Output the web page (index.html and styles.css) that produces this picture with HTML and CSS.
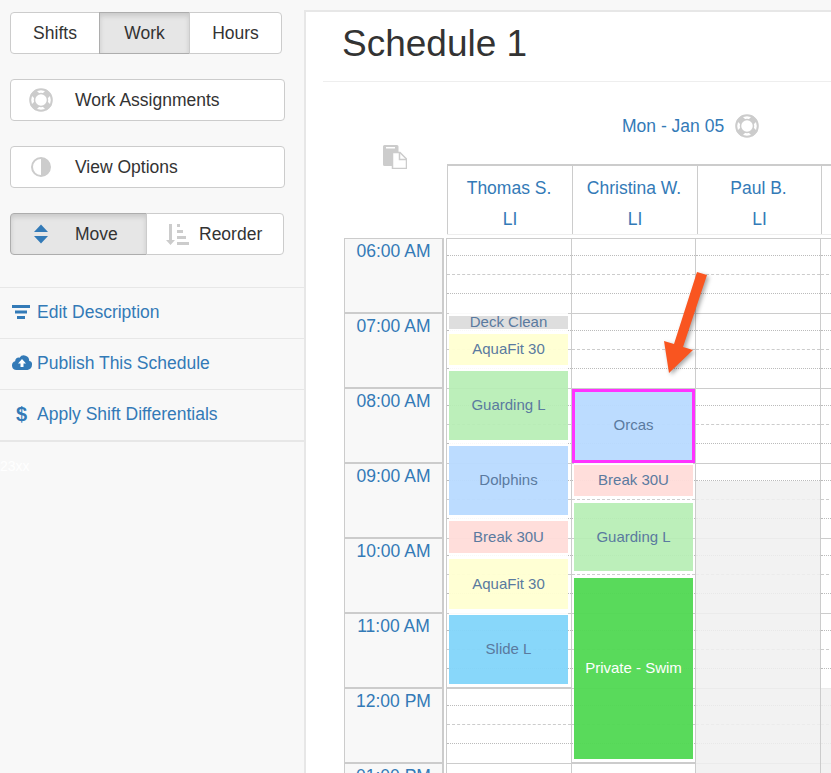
FILE: index.html
```html
<!DOCTYPE html>
<html lang="en">
<head>
    <meta charset="UTF-8">
    <meta name="viewport" content="width=device-width, initial-scale=1.0">
    <title>Schedule 1</title>
    <link rel="stylesheet" href="styles.css">
</head>
<body>
    <aside class="sidebar">
        <div class="btn-group group-mode">
            <button class="btn">Shifts</button>
            <button class="btn active">Work</button>
            <button class="btn">Hours</button>
        </div>

        <button class="btn wide">
            <svg class="btn-icon" width="24" height="24" viewBox="0 0 24 24"><use href="#ring"/></svg>
            Work Assignments
        </button>

        <button class="btn wide">
            <svg class="btn-icon" width="24" height="24" viewBox="0 0 24 24">
                <circle cx="12" cy="12" r="9" fill="#fff" stroke="#ccc" stroke-width="2"/>
                <path d="M12 3a9 9 0 0 1 0 18z" fill="#ccc"/>
            </svg>
            View Options
        </button>

        <div class="btn-group group-tool">
            <button class="btn active tool-move">
                <svg class="btn-icon" width="24" height="24" viewBox="0 0 24 24">
                    <path d="M12 2.500l7 7.500h-14zM12 21.500l-7-7.500h14z" fill="#337ab7"/>
                </svg>
                Move
            </button>
            <button class="btn tool-reorder">
                <svg class="reorder-icon" width="25" height="25" viewBox="0 0 25 25" fill="#ccc">
                    <path d="M4 2h3v16h3l-4.500 5-4.500-5h3zM12 2h3v3h-3zM12 8h6v3h-6zM12 14h9v3h-9zM12 20h12v3h-12z"/>
                </svg>
                Reorder
            </button>
        </div>

        <ul class="side-links">
            <li>
                <a href="#" class="link-edit">
                    <svg width="18" height="14" viewBox="0 0 18 14" fill="#337ab7"><path d="M0 0h18v3h-18zM3 5.500h12v3h-12zM5 11h8v3h-8z"/></svg>
                    Edit Description
                </a>
            </li>
            <li>
                <a href="#">
                    <svg width="20" height="16" viewBox="0 0 20 16"><path d="M4.500 15a4.500 4.500 0 0 1-1.300-8.800 3.300 3.300 0 0 1 4.300-3.400 5.300 5.300 0 0 1 9.700 3.200 3 3 0 0 1 2.800 3.500 5.500 5.500 0 0 1-4.500 5.500z" fill="#337ab7"/><path d="M10 4l4 4.500h-2.500v3.500h-3v-3.500h-2.500z" fill="#fff"/></svg>
                    Publish This Schedule
                </a>
            </li>
            <li>
                <a href="#" class="link-money">
                    <span class="money-icon">$</span>
                    Apply Shift Differentials
                </a>
            </li>
        </ul>
        <div class="side-note">23xx</div>
    </aside>

    <main class="content">
        <h1 class="page-title">Schedule 1</h1>

        <div class="schedule">
            <div class="top">
                <div class="corner">
                    <svg width="24" height="24" viewBox="0 0 24 24">
                        <path d="M1.500 0h12.500a1.500 1.500 0 0 1 1.500 1.500v19.500h-14a1.500 1.500 0 0 1-1.500-1.500v-18a1.500 1.500 0 0 1 1.500-1.500z" fill="#ccc"/>
                        <path d="M3 2h9v1.500h-9z" fill="#fff"/>
                        <path d="M9.500 7.500h7.500l6.500 6.500v9.500h-14z" fill="#fff" stroke="#ccc" stroke-width="1.500"/>
                        <path d="M16.500 8v6.500h7" fill="none" stroke="#ccc" stroke-width="1.500"/>
                    </svg>
                </div>
                <div class="top-right">
                    <div class="date-row">
                        <a href="#">Mon - Jan 05</a>
                        <svg width="24" height="24" viewBox="0 0 24 24"><use href="#ring"/></svg>
                    </div>
                    <div class="staff-row">
                        <div class="staff"><a href="#" class="staff-name">Thomas S.</a><a href="#">LI</a></div>
                        <div class="staff"><a href="#" class="staff-name">Christina W.</a><a href="#">LI</a></div>
                        <div class="staff narrow"><a href="#" class="staff-name">Paul B.</a><a href="#">LI</a></div>
                        <div class="staff"></div>
                    </div>
                </div>
            </div>

            <div class="grid">
                <div class="times">
                    <div class="time">06:00 AM</div>
                    <div class="time">07:00 AM</div>
                    <div class="time">08:00 AM</div>
                    <div class="time">09:00 AM</div>
                    <div class="time">10:00 AM</div>
                    <div class="time">11:00 AM</div>
                    <div class="time">12:00 PM</div>
                    <div class="time">01:00 PM</div>
                </div>

                <div class="day">
                    <div class="hour"></div><div class="hour"></div><div class="hour"></div><div class="hour"></div>
                    <div class="hour"></div><div class="hour"></div><div class="hour"></div><div class="hour"></div>
                    <div class="event grey" style="top: 78px; height: 13px;">Deck Clean</div>
                    <div class="event yellow" style="top: 96px; height: 31px;">AquaFit 30</div>
                    <div class="event green" style="top: 133px; height: 69px;">Guarding L</div>
                    <div class="event blue" style="top: 208px; height: 69px;">Dolphins</div>
                    <div class="event pink" style="top: 283px; height: 32px;">Break 30U</div>
                    <div class="event yellow" style="top: 321px; height: 50px;">AquaFit 30</div>
                    <div class="event sky stack-end" style="top: 377px; height: 69px;">Slide L</div>
                </div>
                <div class="day narrow">
                    <div class="hour"></div><div class="hour"></div><div class="hour"></div><div class="hour"></div>
                    <div class="hour"></div><div class="hour"></div><div class="hour"></div><div class="hour"></div>
                    <div class="event pink" style="top: 227px; height: 31px;">Break 30U</div>
                    <div class="event blue selected" style="top: 151px; height: 74px;">Orcas</div>
                    <div class="event green" style="top: 265px; height: 68px;">Guarding L</div>
                    <div class="event private stack-end" style="top: 340px; height: 181px;">Private - Swim</div>
                </div>
                <div class="day">
                    <div class="hour"></div><div class="hour"></div><div class="hour"></div><div class="hour"></div>
                    <div class="hour"></div><div class="hour"></div><div class="hour"></div><div class="hour"></div>
                    <div class="off" style="top: 243px;"></div>
                </div>
                <div class="day">
                    <div class="hour"></div><div class="hour"></div><div class="hour"></div><div class="hour"></div>
                    <div class="hour"></div><div class="hour"></div><div class="hour"></div><div class="hour"></div>
                    <div class="off" style="top: 450px;"></div>
                </div>
            </div>
        </div>
    </main>

    <svg class="arrow" width="70" height="120" viewBox="0 0 70 120">
        <path d="M52 4L62 7L38 79L48 82L24 105L19 73L29 76Z" fill="#f95520"/>
    </svg>

    <svg class="defs" width="0" height="0">
        <symbol id="ring" viewBox="0 0 24 24">
            <circle cx="12" cy="12" r="10.800" fill="#fff" stroke="#ccc" stroke-width="2"/>
            <path d="M12 12L4 4M12 12L20 4M12 12L20 20M12 12L4 20" stroke="#ccc" stroke-width="7"/>
            <circle cx="12" cy="12" r="6.500" fill="#fff" stroke="#ccc" stroke-width="1.500"/>
        </symbol>
    </svg>
</body>
</html>
```

FILE: styles.css
```css
html, body {
    height: 100%;
    overflow: hidden;
}

body {
    margin: 0;
    display: flex;
    background-color: #f8f8f8;
    color: #333;
    font-family: "Liberation Sans", Arial, sans-serif;
    font-size: 17.5px;
}

a {
    color: #337ab7;
    text-decoration: none;
}

/* sidebar */
.sidebar {
    width: 304px;
    flex: none;
    padding-top: 12px;
    box-sizing: border-box;
}

.btn {
    height: 42px;
    background-color: #fff;
    border: 1px solid #ccc;
    border-radius: 4px;
    color: #333;
    font: inherit;
    padding: 0;
}

.btn.active {
    background-color: #e6e6e6;
    border-color: #adadad;
    box-shadow: inset 0 3px 5px rgba(0, 0, 0, .125);
}

.btn-group {
    display: flex;
    margin-left: 10px;
}

.btn-group .btn {
    border-radius: 0;
    margin-left: -1px;
}

.btn-group .btn:first-child {
    border-radius: 4px 0 0 4px;
    margin-left: 0;
}

.btn-group .btn:last-child {
    border-radius: 0 4px 4px 0;
}

.group-mode {
    display: grid;
    grid-template-columns: 90px 90px 92px;
    width: 272px;
}

.group-tool {
    width: 274px;
    margin-top: 25px;
}

.wide {
    display: flex;
    align-items: center;
    width: 275px;
    margin: 25px 0 0 10px;
    text-align: left;
}

.btn-icon {
    margin: 0 22px 0 18px;
}

.tool-move {
    display: flex;
    align-items: center;
    width: 137px;
}

.tool-reorder {
    display: flex;
    align-items: center;
    width: 138px;
}

.reorder-icon {
    margin: 0 9px 0 18px;
}

.side-links {
    list-style: none;
    margin: 32px 0 0;
    padding: 0;
    border-top: 1px solid #e7e7e7;
}

.side-links li {
    height: 51px;
    box-sizing: border-box;
    border-bottom: 1px solid #e7e7e7;
}

.side-links li:last-child {
    height: 52px;
    border-bottom-width: 2px;
}

.side-links a {
    display: flex;
    align-items: center;
    gap: 5px;
    height: 48px;
    padding-left: 12px;
}

.side-links a.link-edit {
    gap: 7px;
}

.side-links a.link-money {
    gap: 6px;
}

.money-icon {
    width: 19px;
    text-align: center;
    font-size: 20px;
    font-weight: bold;
}

.side-note {
    color: #fff;
    font-size: 14px;
    margin-top: 16px;
}

/* main panel */
.content {
    flex: 1;
    min-width: 0;
    margin-top: 10px;
    background-color: #fff;
    border-top: 2px solid #e7e7e7;
    border-left: 2px solid #e7e7e7;
}

.page-title {
    height: 69px;
    margin: 0 0 0 17px;
    padding-left: 19px;
    border-bottom: 1px solid #eee;
    font-size: 37px;
    font-weight: normal;
    line-height: 64px;
}

.schedule {
    margin-left: 38px;
    width: 600px;
}

.top {
    display: flex;
}

.corner {
    width: 103px;
    flex: none;
    padding: 63px 0 0 39px;
    box-sizing: border-box;
}

.date-row {
    display: flex;
    align-items: flex-start;
    gap: 11px;
    height: 82px;
    padding: 32px 0 0 175px;
    box-sizing: border-box;
    line-height: 24px;
}

.date-row svg {
    flex: none;
}

.staff-row {
    display: flex;
    border-top: 2px solid #ccc;
    border-bottom: 1px solid #eee;
    width: 500px;
}

.staff {
    width: 125px;
    height: 68px;
    flex: none;
    padding-top: 7px;
    box-sizing: border-box;
    border-left: 1px solid #ccc;
    text-align: center;
    line-height: 31px;
}

.staff.narrow {
    width: 124px;
}

.staff a {
    display: block;
}

.staff a.staff-name {
    padding-right: 2px;
}

/* time grid */
.grid {
    display: flex;
    margin-top: 3px;
}

.times {
    width: 100px;
    flex: none;
    margin-right: 2px;
}

.time {
    height: 75px;
    box-sizing: border-box;
    background-color: #f8f8f8;
    border: solid #ccc;
    border-width: 1px 2px 1px 1px;
    color: #337ab7;
    text-align: center;
    line-height: 24px;
}

.day {
    position: relative;
    width: 125px;
    flex: none;
    box-sizing: border-box;
    border-left: 1px solid #ccc;
}

.day.narrow {
    width: 124px;
}

.hour {
    position: relative;
    height: 75px;
    box-sizing: border-box;
    border-top: 1px solid #ccc;
}

.hour::before {
    content: "";
    position: absolute;
    left: 0;
    right: 0;
    top: 16px;
    height: 37px;
    border-top: 1px dotted #bbb;
    border-bottom: 1px dotted #bbb;
}

.hour::after {
    content: "";
    position: absolute;
    left: 0;
    right: 0;
    top: 35px;
    border-top: 1px dashed #ccc;
}

.event {
    position: absolute;
    left: 2px;
    width: 119px;
    display: flex;
    align-items: center;
    justify-content: center;
    box-sizing: border-box;
    padding-bottom: 2px;
    box-shadow: 0 3px 0 rgba(255, 255, 255, .9), 0 -3px 0 rgba(255, 255, 255, .9);
    color: #5a7a9f;
    font-size: 15px;
    z-index: 2;
}

.stack-end::after {
    content: "";
    position: absolute;
    left: -3px;
    right: -3px;
    bottom: -4px;
    height: 1px;
    background-color: #ccc;
}

.grey { background-color: rgba(218, 218, 218, .9); }
.yellow { background-color: rgba(255, 255, 210, .95); }
.green { background-color: rgba(182, 238, 180, .92); }
.blue { background-color: rgba(184, 218, 255, .95); }
.pink { background-color: rgba(255, 220, 217, .95); }
.sky { background-color: rgba(130, 213, 250, .95); }

.private {
    background-color: rgba(80, 216, 82, .95);
    color: #fff;
}

.selected {
    left: 0;
    width: 123px;
    padding-bottom: 4px;
    border: 3px solid #ff33ff;
    box-shadow: none;
}

.off {
    position: absolute;
    left: 0;
    right: 0;
    bottom: 0;
    background-color: rgba(240, 240, 240, .85);
    z-index: 3;
}

.arrow {
    position: absolute;
    left: 645px;
    top: 268px;
    z-index: 5;
    filter: drop-shadow(2px 2px 2px rgba(0, 0, 0, .35));
}

.defs {
    position: absolute;
}
```
